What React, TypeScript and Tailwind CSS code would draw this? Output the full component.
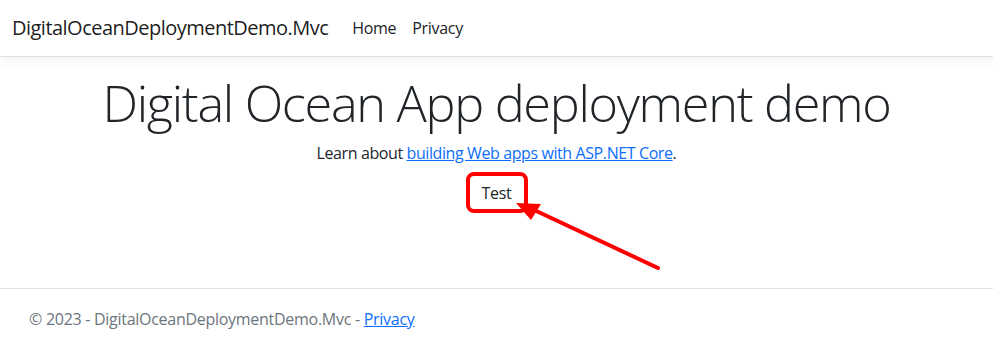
import React from "react";

export default function App() {
  return (
    <div
      className="relative flex h-[349px] w-full flex-col overflow-hidden bg-white text-[#212529]"
      style={{ fontFamily: '"Open Sans", "Noto Sans", sans-serif' }}
    >
      <header className="flex h-[57px] shrink-0 items-center border-b border-[#dee2e6] bg-white px-3 shadow-[0_4px_12px_rgba(0,0,0,0.05)]">
        <span className="mr-4 text-[20px] leading-[30px] text-black/90 tracking-[-0.52px]">
          DigitalOceanDeploymentDemo.Mvc
        </span>
        <nav className="flex text-[16px] tracking-[-0.3px]">
          <a className="px-2 py-2">Home</a>
          <a className="px-2 py-2">Privacy</a>
        </nav>
      </header>

      <main className="mt-4 flex-1">
        <div className="flex flex-col items-center text-center">
          <h1 className="mb-2 text-[50.4px] font-light leading-[1.2] tracking-[-1.3px]">
            Digital Ocean App deployment demo
          </h1>
          <p className="mb-4 text-[16px] leading-6 tracking-[-0.4px]">
            Learn about{" "}
            <a className="text-[#0d6efd] underline">building Web apps with ASP.NET Core</a>.
          </p>
          <div className="text-[16px] leading-6 tracking-[-0.3px]">Test</div>
        </div>
      </main>

      <footer className="h-[61px] shrink-0 border-t border-[#dee2e6] text-[16px] leading-[60px] text-[#6c757d]">
        <div className="pl-[29px] tracking-[-0.28px]">
          © 2023 - DigitalOceanDeploymentDemo.Mvc -{" "}
          <a className="text-[#0d6efd] underline">Privacy</a>
        </div>
      </footer>

      <svg
        className="pointer-events-none absolute left-0 top-0"
        width="993"
        height="349"
        viewBox="0 0 993 349"
      >
        <rect
          x="468"
          y="174"
          width="58"
          height="37"
          rx="6"
          ry="6"
          fill="none"
          stroke="#ff0000"
          strokeWidth="4"
        />
        <line
          x1="658"
          y1="268"
          x2="532"
          y2="209"
          stroke="#ff0000"
          strokeWidth="4"
          strokeLinecap="round"
        />
        <polygon points="516,203 541,204 531,220" fill="#ff0000" />
      </svg>
    </div>
  );
}
